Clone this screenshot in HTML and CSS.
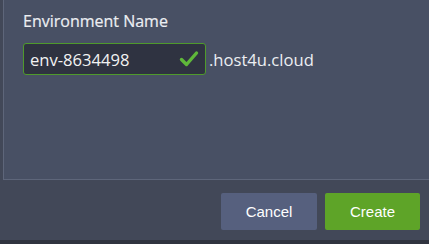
FILE: index.html
```html
<!DOCTYPE html>
<html>
<head>
  <meta charset="UTF-8">
  <title>New Environment</title>
  <link rel="stylesheet" href="styles.css">
</head>
<body>
  <div class="dialog">
    <div class="panel">
      <label for="envName">Environment Name</label>
      <div class="name-row">
        <div class="field">
          <input type="text" id="envName" value="env-8634498">
          <svg class="check" width="20" height="18" viewBox="0 0 20 18">
            <path d="M2.5 9.5 L7.5 14.5 L17.5 3" fill="none" stroke="#5fb83a" stroke-width="3.4" stroke-linecap="round" stroke-linejoin="round"/>
          </svg>
        </div>
        <span class="suffix">.host4u.cloud</span>
      </div>
    </div>

    <div class="button-group">
      <button class="secondary">Cancel</button>
      <button class="primary">Create</button>
    </div>
    <div class="bottom-bar"></div>
  </div>
</body>
</html>
```

FILE: styles.css
```css
body {
  margin: 0;
  background: #424858;
  font-family: 'Open Sans', sans-serif;
  overflow: hidden;
}

.dialog {
  width: 429px;
  height: 244px;
}

.panel {
  margin-left: 3px;
  padding: 11px 0 0 19px;
  box-sizing: border-box;
  height: 180px;
  background: #485064;
  border-left: 1px solid #5e667a;
  border-bottom: 1px solid #5e667a;
}

label {
  display: block;
  font-size: 16px;
  line-height: 20px;
  color: #eceef2;
  -webkit-text-stroke: 0.2px #eceef2;
}

.name-row {
  display: flex;
  align-items: center;
  margin-top: 12px;
}

.field {
  position: relative;
  width: 183px;
  height: 32px;
}

.field input {
  width: 100%;
  height: 100%;
  box-sizing: border-box;
  padding: 0 34px 0 6px;
  border: 1px solid #4f9a2c;
  border-radius: 3px;
  background: #2f3341;
  color: #f2f2f2;
  font-family: 'Open Sans', sans-serif;
  font-size: 16.6px;
  outline: none;
}

.check {
  position: absolute;
  right: 7px;
  top: 7px;
}

.suffix {
  margin-left: 3px;
  font-size: 16.6px;
  color: #eceef2;
}

.button-group {
  display: flex;
  justify-content: flex-end;
  gap: 8px;
  height: 60px;
  padding: 13px 9px 0 0;
  box-sizing: border-box;
}

button {
  width: 96px;
  height: 37px;
  border: none;
  border-radius: 2px;
  font-family: 'Liberation Sans', Arial, sans-serif;
  font-size: 15px;
  color: #fff;
  cursor: pointer;
}

.secondary {
  background: #56607e;
}

.primary {
  width: 95px;
  background: #5ea428;
}

.bottom-bar {
  height: 4px;
  background: #30343f;
}
```
